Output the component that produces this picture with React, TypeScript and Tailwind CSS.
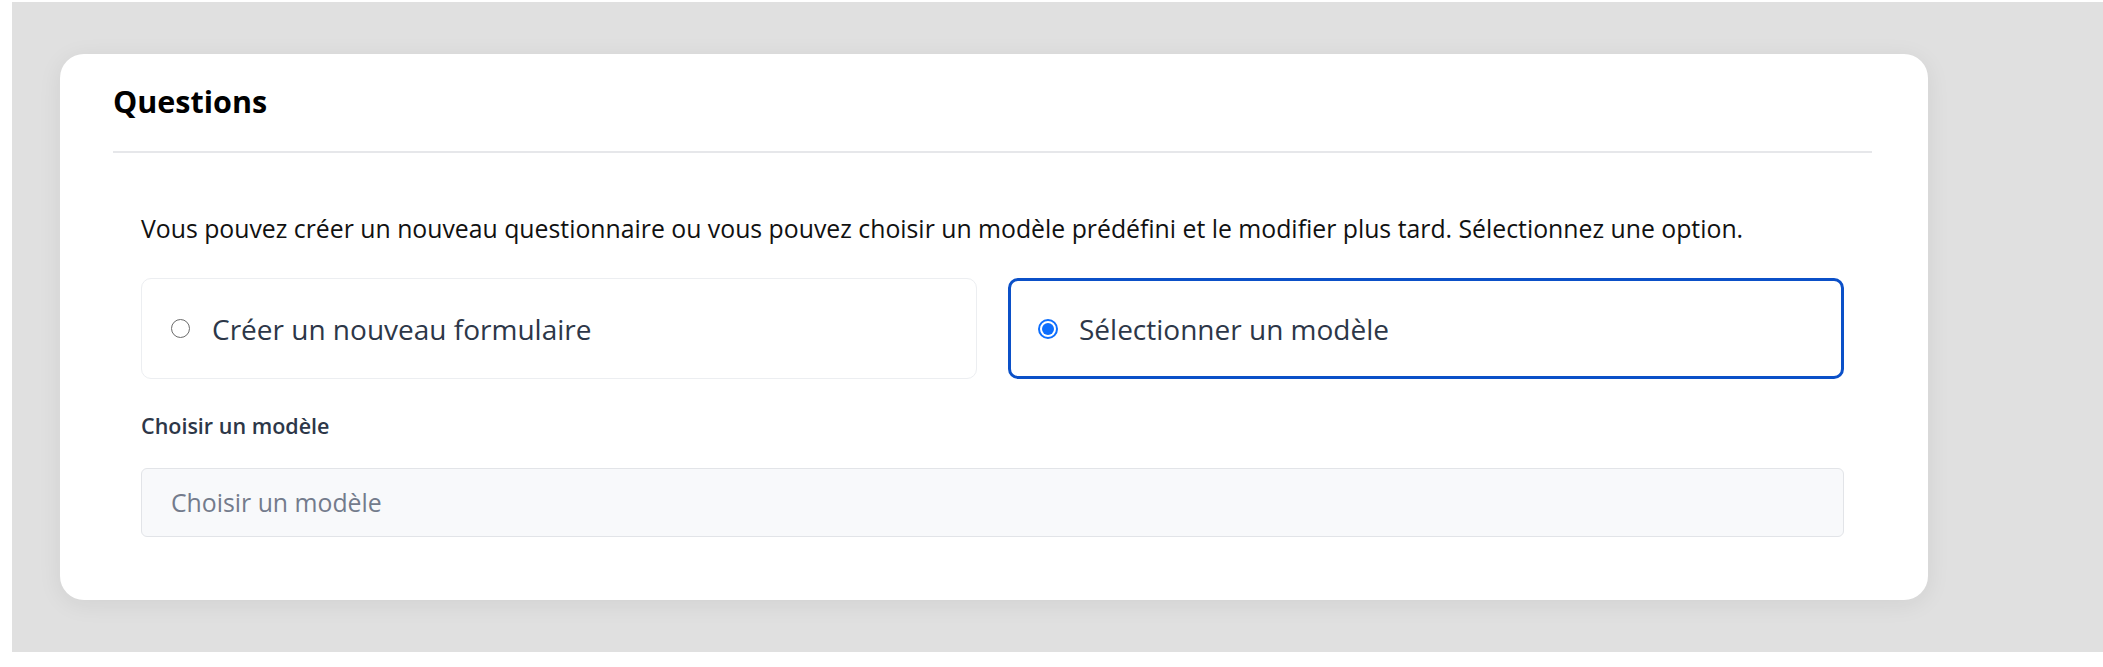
import { useState } from "react";

const options = [
  { id: "new", label: "Créer un nouveau formulaire" },
  { id: "template", label: "Sélectionner un modèle" },
];

function Radio({ checked }: { checked: boolean }) {
  if (checked) {
    return (
      <span className="flex h-[20px] w-[20px] shrink-0 items-center justify-center rounded-full border-2 border-[#0d6efd]">
        <span className="h-[12px] w-[12px] rounded-full bg-[#0d6efd]" />
      </span>
    );
  }
  return <span className="h-[19px] w-[19px] shrink-0 rounded-full border-[1.5px] border-[#6b6b6b]" />;
}

export default function App() {
  const [choice, setChoice] = useState("template");

  return (
    <div className="min-h-screen bg-white pl-[12px] pt-[2px] font-['Open_Sans',sans-serif]">
      <div className="h-[650px] bg-[#e0e0e0] pl-[48px] pt-[52px]">
        {/* Card */}
        <div className="h-[546px] w-[1868px] rounded-[24px] bg-white pl-[53px] pr-[56px] pt-[29px] shadow-[0_4px_24px_rgba(0,0,0,0.07)]">
          <h2 className="text-[30.5px] font-bold leading-[36px] text-black">Questions</h2>
          <div className="mt-[32px] h-[2px] bg-[#e6e7ea]" />

          <div className="px-[28px] pt-[62px]">
            <p className="text-[24.8px] leading-[26px] text-[#111]">
              Vous pouvez créer un nouveau questionnaire ou vous pouvez choisir un modèle prédéfini et le modifier plus tard. Sélectionnez une option.
            </p>

            {/* Options */}
            <div className="mt-[37px] grid grid-cols-2 gap-[31px]">
              {options.map((opt) => {
                const active = choice === opt.id;
                return (
                  <button
                    key={opt.id}
                    type="button"
                    onClick={() => setChoice(opt.id)}
                    className={
                      active
                        ? "flex h-[101px] items-center gap-[21px] rounded-[10px] border-[3px] border-[#0b50c8] pl-[27px] text-left"
                        : "flex h-[101px] items-center gap-[22px] rounded-[10px] border border-[#eceef1] pl-[29px] text-left"
                    }
                  >
                    <Radio checked={active} />
                    <span className="text-[28px] leading-[32px] text-[#2d3748]">{opt.label}</span>
                  </button>
                );
              })}
            </div>

            <label className="mt-[35px] block text-[21.5px] font-semibold leading-[23px] text-[#2d3748]">
              Choisir un modèle
            </label>
            <div className="mt-[31px] flex h-[69px] items-center rounded-[6px] border border-[#e2e4e8] bg-[#f8f9fb] pl-[29px] text-[24.8px] text-[#737b8c]">
              Choisir un modèle
            </div>
          </div>
        </div>
      </div>
    </div>
  );
}
